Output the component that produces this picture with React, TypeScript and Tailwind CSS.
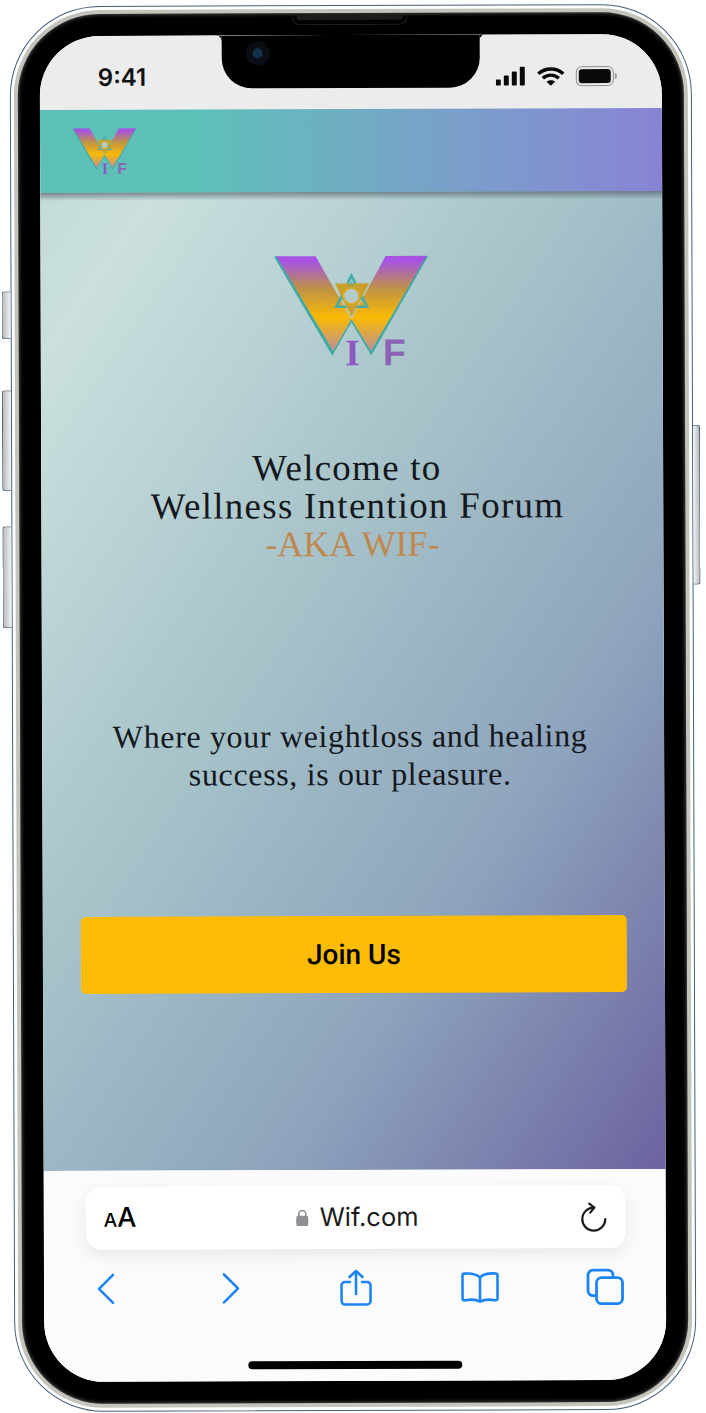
import React, { useId } from "react";

const Logo: React.FC<{ className: string }> = ({ className }) => {
	const id = useId();
	return (
		<svg viewBox="0 0 555 390" className={className}>
			<defs>
				<linearGradient id={id} gradientUnits="userSpaceOnUse" x1="0" y1="33" x2="0" y2="330">
					<stop offset="0.05" stopColor="#a653e3" />
					<stop offset="0.33" stopColor="#bf9246" />
					<stop offset="0.62" stopColor="#fab905" />
					<stop offset="1" stopColor="#b48ba6" />
				</linearGradient>
			</defs>
			{/* teal edge behind the W */}
			<path d="M45 34 L61 34 L222 316 L277 222 L335 316 L497 34 L508 34 L336 332 L277 232 L219 332 Z" fill="#3fa9a5" />
			<path d="M52 33 L170 33 L277 222 L380 33 L503 33 L335 318 L277 222 L222 318 Z" fill={`url(#${id})`} />
			{/* star in the middle */}
			<path d="M277 92 L324 185 L232 185 Z" fill="none" stroke="#45aca8" strokeWidth="8" />
			<path d="M228 115 L330 115 L277 215 Z" fill="#c9a02a" />
			<path d="M248 164 L306 164 L277 112 Z" fill="none" stroke="#45aca8" strokeWidth="5" opacity="0.6" />
			<circle cx="277" cy="153" r="25" fill="#b4ccc9" stroke="#d9a820" strokeWidth="7" />
			<text x="280" y="361" textAnchor="middle" fontFamily="'Liberation Serif', serif" fontWeight="700" fontSize="112" fill="#8d58c2">
				I
			</text>
			<text x="405" y="361" textAnchor="middle" fontFamily="'Liberation Sans', sans-serif" fontWeight="700" fontSize="112" fill="#8a63b4">
				F
			</text>
		</svg>
	);
};

const StatusIcons: React.FC = () => (
	<div className="flex items-center gap-[11px]">
		<svg viewBox="0 0 30 20" className="w-[30px] h-[20px]" fill="#0a0a0a">
			<rect x="0" y="13" width="5" height="6" rx="1" />
			<rect x="8" y="9" width="5" height="10" rx="1" />
			<rect x="16" y="5" width="5" height="14" rx="1" />
			<rect x="24" y="0" width="5" height="19" rx="1" />
		</svg>
		<svg viewBox="0 0 28 20" className="w-[28px] h-[20px]" fill="none" stroke="#0a0a0a" strokeWidth="3.4">
			<path d="M1.5 7.5 C8.5 1 19.5 1 26.5 7.5" />
			<path d="M6 12 C10.5 7.8 17.5 7.8 22 12" />
			<path d="M14 19.5 L9.8 15.4 C12 13.4 16 13.4 18.2 15.4 Z" fill="#0a0a0a" stroke="none" />
		</svg>
		<div className="flex items-center gap-[1px]">
			<div className="w-[38px] h-[20px] rounded-[6px] border-[1.5px] border-[#8f8f8f] p-[2px]">
				<div className="w-full h-full rounded-[3px] bg-[#0a0a0a]" />
			</div>
			<div className="w-[2px] h-[6px] rounded-r-sm bg-[#9a9a9a]" />
		</div>
	</div>
);

const BLUE = "#1c85f5";

const Toolbar: React.FC = () => (
	<div className="flex justify-between pl-[42px] pr-[41px] mt-[19px] h-[40px]">
		<div className="w-[40px] flex items-center justify-center">
			<svg viewBox="0 0 20 32" className="w-[20px] h-[32px]" fill="none" stroke={BLUE} strokeWidth="2.6" strokeLinecap="round" strokeLinejoin="round">
				<path d="M17 2 L3 16 L17 30" />
			</svg>
		</div>
		<div className="w-[40px] flex items-center justify-center">
			<svg viewBox="0 0 20 32" className="w-[20px] h-[32px]" fill="none" stroke={BLUE} strokeWidth="2.6" strokeLinecap="round" strokeLinejoin="round">
				<path d="M3 2 L17 16 L3 30" />
			</svg>
		</div>
		<div className="w-[40px] flex items-center justify-center">
			<svg viewBox="0 0 32 38" className="w-[32px] h-[38px]" fill="none" stroke={BLUE} strokeWidth="2.6" strokeLinecap="round" strokeLinejoin="round">
				<path d="M10 13 H5 a3.5 3.5 0 0 0 -3.5 3.5 V32 a3.5 3.5 0 0 0 3.5 3.5 H27 a3.5 3.5 0 0 0 3.5 -3.5 V16.5 a3.5 3.5 0 0 0 -3.5 -3.5 H22" />
				<path d="M16 25 V2 M9.5 8 L16 2 L22.5 8" />
			</svg>
		</div>
		<div className="w-[40px] flex items-center justify-center">
			<svg viewBox="0 0 38 32" className="w-[38px] h-[32px]" fill="none" stroke={BLUE} strokeWidth="2.6" strokeLinecap="round" strokeLinejoin="round">
				<path d="M19 6 C16 2.5 10 1.5 3 2 C2 2 1.5 2.8 1.5 4 V27 C1.5 28.5 2.5 29 4 28.7 C10 27.6 15.5 28 19 30 C22.5 28 28 27.6 34 28.7 C35.5 29 36.5 28.5 36.5 27 V4 C36.5 2.8 36 2 35 2 C28 1.5 22 2.5 19 6 Z" />
				<path d="M19 6 V30" />
			</svg>
		</div>
		<div className="w-[40px] flex items-center justify-center">
			<svg viewBox="0 0 38 38" className="w-[38px] h-[38px]" fill="none" stroke={BLUE} strokeWidth="2.8" strokeLinejoin="round">
				<rect x="10.5" y="9.5" width="26" height="26" rx="5" />
				<path d="M10.5 27.5 H7 a5 5 0 0 1 -5 -5 V7 a5 5 0 0 1 5 -5 H22 a5 5 0 0 1 5 5 V9.5" />
			</svg>
		</div>
	</div>
);

export default function App() {
	return (
		<div className="w-[706px] h-[1413px] overflow-hidden bg-white pt-[5px] pl-[12px]">
			<div className="relative w-[682px] h-[1406px] rotate-[-0.2deg]">
				{/* side buttons */}
				<div className="absolute left-[-9px] top-[285px] w-[9px] h-[48px] rounded-l-[3px] border border-r-0 border-[#55677a] bg-linear-to-r from-[#b8bcc0] to-[#f4f4f4]" />
				<div className="absolute left-[-9px] top-[384px] w-[9px] h-[101px] rounded-l-[3px] border border-r-0 border-[#55677a] bg-linear-to-r from-[#b8bcc0] to-[#f4f4f4]" />
				<div className="absolute left-[-9px] top-[520px] w-[9px] h-[102px] rounded-l-[3px] border border-r-0 border-[#55677a] bg-linear-to-r from-[#b8bcc0] to-[#f4f4f4]" />
				<div className="absolute right-[-7px] top-[421px] w-[7px] h-[160px] rounded-r-[3px] border border-l-0 border-[#55677a] bg-linear-to-l from-[#b8bcc0] to-[#f4f4f4]" />

				<div className="w-full h-full rounded-[90px] border-[1.5px] border-[#47607a] bg-white p-[3px]">
					<div className="relative w-full h-full rounded-[86px] border-[4px] border-[#c4c4bd] bg-black p-[22px] shadow-[inset_0_0_4px_rgba(120,120,120,0.9)]">
						{/* speaker */}
						<div className="absolute left-[274px] top-[0px] w-[116px] h-[12px] rounded-b-[8px] border border-t-0 border-[#222] flex justify-center pt-[1px]">
							<div className="w-[106px] h-[6px] rounded-full bg-[#1c1c1c]" />
						</div>

						<div className="relative w-full h-full rounded-[60px] overflow-hidden flex flex-col bg-white font-['Inter',sans-serif]">
							{/* notch */}
							<div className="absolute left-[182px] top-0 w-[258px] h-[53px] rounded-b-[30px] bg-black z-20 flex items-start pt-[6px] pl-[24px]">
								<div className="w-[24px] h-[24px] rounded-full bg-[#0a0d14] flex items-center justify-center">
									<div className="w-[10px] h-[10px] rounded-full bg-[#12304a]" />
								</div>
							</div>
							<div className="absolute left-[177px] top-0 w-[5px] h-[5px] z-20 bg-[radial-gradient(circle_at_0_100%,transparent_4.5px,black_5px)]" />
							<div className="absolute left-[440px] top-0 w-[5px] h-[5px] z-20 bg-[radial-gradient(circle_at_100%_100%,transparent_4.5px,black_5px)]" />

							{/* status bar */}
							<div className="h-[74px] shrink-0 bg-[#ececec] flex items-end justify-between pb-[22px] pl-[58px] pr-[45px]">
								<span className="text-[24px] leading-[30px] font-semibold text-[#111] -mb-[5px]">9:41</span>
								<StatusIcons />
							</div>

							{/* app header */}
							<div className="relative z-10 h-[83px] -mb-[1px] shrink-0 pl-[26px] pt-[14px] bg-linear-to-r from-[#5cc0b8] from-25% to-[#8883d5]">
								<Logo className="w-[77px] h-[54px]" />
								<div className="absolute inset-x-0 top-[83px] h-[8px] bg-linear-to-b from-[#3c464e]/55 to-transparent" />
							</div>

							{/* page */}
							<div className="h-[979px] shrink-0 flex flex-col items-center bg-[linear-gradient(124deg,#c3dbd9_0%,#cbe0de_9%,#a5c2c9_42%,#8da3bc_70%,#6c63a0_100%)] text-[#14181c] font-['Liberation_Serif',serif]">
								<Logo className="w-[186px] h-[130px] mt-[54px]" />
								<h1 className="mt-[74px] text-[37px] leading-[38px] text-center font-normal tracking-[1.25px]">
									Welcome to{"\u00a0"}
									<br />
									{"\u00a0"}Wellness Intention Forum
									<br />
									<span className="text-[36px] tracking-normal text-[#c0884f]">-AKA WIF-</span>
								</h1>
								<p className="mt-[154px] text-[32px] leading-[38px] tracking-[0.65px] text-center -ml-[6px]">
									Where your weightloss and healing
									<br />
									success, is our pleasure.
								</p>
								<button className="mt-[123px] w-[546px] h-[77px] rounded-[5px] bg-[#fcbc05] text-[28px] font-medium text-black font-['Roboto',sans-serif]">
									Join Us
								</button>
							</div>

							{/* safari bottom bar */}
							<div className="flex-1 flex flex-col bg-[#fbfbfb]">
								<div className="ml-[42px] mr-[40px] mt-[16px] h-[63px] rounded-[16px] bg-white shadow-[0_6px_16px_rgba(0,0,0,0.08)] flex items-center justify-between pl-[18px] pr-[18px]">
									<span className="text-black font-medium flex items-baseline">
										<span className="text-[19px]">A</span>
										<span className="text-[27px]">A</span>
									</span>
									<span className="flex items-center gap-[11px] text-[25.5px] text-[#1b1b1b] -ml-[2px]">
										<svg viewBox="0 0 14 18" className="w-[13px] h-[17px]" fill="#8e8e93">
											<rect x="0.5" y="7" width="13" height="11" rx="2" />
											<path d="M3.2 8 V5 a3.8 3.8 0 0 1 7.6 0 V8" fill="none" stroke="#8e8e93" strokeWidth="1.7" />
										</svg>
										Wif.com
									</span>
									<svg viewBox="0 0 28 30" className="w-[28px] h-[30px]" fill="none" stroke="#1b1b1b" strokeWidth="2.2" strokeLinecap="round" strokeLinejoin="round">
										<path d="M14.5 5.5 A11.5 11.5 0 1 0 25.5 17" />
										<path d="M9.5 1.5 L14.5 5.5 L10.5 10.5" />
									</svg>
								</div>
								<Toolbar />
								<div className="mt-auto mb-[12px] mx-auto w-[214px] h-[8px] rounded-full bg-black" />
							</div>
						</div>
					</div>
				</div>
			</div>
		</div>
	);
}
